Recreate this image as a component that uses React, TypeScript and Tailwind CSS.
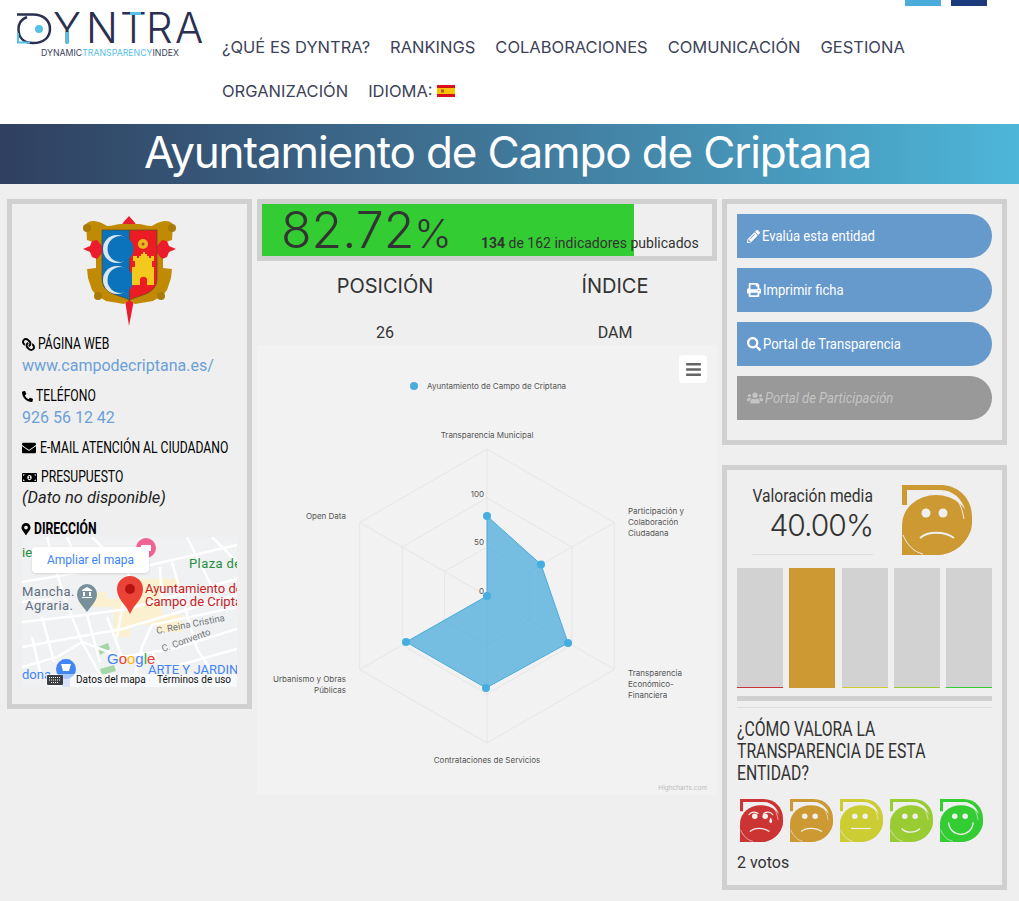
import { FaBars, FaEnvelope, FaLink, FaMapMarkerAlt, FaMoneyBillAlt, FaPencilAlt, FaPhoneAlt, FaPrint, FaSearch, FaUsers } from "react-icons/fa";

const head = "font-['Inter',sans-serif]";

function Logo() {
    return (
        <svg width="205" height="60" viewBox="0 0 205 60" className="shrink-0">
            <path d="M17 13.5H33C44 13.5 50 20 50 28C50 37 43 42 33 42C24 42 18.500 37 18.500 28C18.500 22 22 18 27 16" fill="none" stroke="#2b3050" strokeWidth="2.500" />
            <path d="M18 32V41.500H30" fill="none" stroke="#55c1e6" strokeWidth="2" />
            <circle cx="39" cy="28" r="4" fill="#55c1e6" />
            <text y="42" x="53 86 120 146 175" fill="#2b3050" fontFamily="Inter" fontWeight="300" fontSize="42">YNTRA</text>
            <rect x="65.500" y="31" width="3" height="12" fill="#55c1e6" />
            <rect x="130" y="11" width="11" height="3" fill="#55c1e6" />
            <text x="41" y="54.500" fontFamily="Inter" fontSize="9.500" textLength="138" lengthAdjust="spacingAndGlyphs" fill="#3a3f5c">
                DYNAMIC<tspan fill="#55c1e6">TRANSPARENCY</tspan>INDEX
            </text>
        </svg>
    );
}

function Flag() {
    return (
        <svg width="18" height="12" viewBox="0 0 18 12" className="ml-1 inline-block">
            <rect width="18" height="12" fill="#d8121a" />
            <rect y="3" width="18" height="6" fill="#f8c400" />
            <rect x="4" y="4.500" width="3" height="3" fill="#b5502a" />
        </svg>
    );
}

function Coat() {
    return (
        <svg width="93" height="111" viewBox="0 0 93 111" className="mx-auto">
            <path d="M38 14C38 7 42 5 46 0C50 5 54 7 54 14Z" fill="#ec1c2c" />
            <path d="M42 84H51L46 110Z" fill="#ec1c2c" />
            <path d="M3 8C8 2 18 6 24 10C30 10 34 8 38 8L55 8C59 8 63 10 69 10C75 6 85 2 90 8L89 24L80 27L80 52L89 53L88 62L84 74L80 79L70 85L52 88L46 84L41 88L23 85L13 79L9 74L5 62L4 53L13 52L13 27L4 24Z" fill="#c18a04" />
            <circle cx="4" cy="12" r="4" fill="#a97a08" />
            <circle cx="89" cy="12" r="4" fill="#a97a08" />
            <circle cx="15" cy="80" r="4" fill="#a97a08" />
            <circle cx="78" cy="80" r="4" fill="#a97a08" />
            <path d="M0 33L7 30L9 25L14 24L19 30V37L14 43L9 41L7 36Z" fill="#ec1c2c" />
            <path d="M93 33L86 30L84 25L79 24L74 30V37L79 43L84 41L86 36Z" fill="#ec1c2c" />
            <path d="M19 14H46.500V84C38 80 30 79 25 75C21 72 19 68 19 62Z" fill="#0b72bc" stroke="#5a4a20" strokeWidth="0.700" />
            <path d="M74 14H46.500V84C55 80 63 79 68 75C72 72 74 68 74 62Z" fill="#ec1c25" stroke="#5a4a20" strokeWidth="0.700" />
            <circle cx="34" cy="33" r="14" fill="#dde6ea" />
            <circle cx="37.500" cy="33" r="13" fill="#0b72bc" />
            <circle cx="34" cy="64" r="14" fill="#dde6ea" />
            <circle cx="37.500" cy="64" r="13" fill="#0b72bc" />
            <circle cx="60" cy="28" r="5" fill="#e8b820" />
            <circle cx="60" cy="28" r="1.500" fill="#a8501a" />
            <path d="M50 51H52V45H50V40H54V42H56V40H58V38H60V36H62V38H64V40H66V42H68V40H71V45H69V51H71V69H64V63C63 60 58 60 57 63V69H49V51Z" fill="#f4c91e" />
        </svg>
    );
}

function MapView() {
    const streets = [
        "M25 0L42 60L60 105L85 150",
        "M0 45L60 35L120 30L215 8",
        "M0 85L62 78L105 72L215 42",
        "M0 110L55 100L100 92L215 58",
        "M110 150L120 110L130 88L215 70",
        "M60 105L100 120L150 112L215 92",
        "M120 0L108 30L100 72L95 100",
        "M65 78L78 125",
        "M0 130L35 120L60 105",
        "M165 0L180 30L195 60",
        "M150 25L160 60L175 112",
        "M70 0L95 25",
        "M130 115L150 150",
        "M175 112L200 150",
        "M0 65L30 62",
        "M20 80L32 125",
        "M45 0L60 35",
        "M138 30L140 60",
        "M190 0L215 25",
        "M85 80L100 120",
        "M150 130L215 112",
        "M10 100L18 135",
    ];
    return (
        <div className="relative h-[150px] w-[215px] overflow-hidden bg-[#f0f1f3]">
            <svg width="215" height="150" viewBox="0 0 215 150" className="block">
                <path d="M54 55H85V62H100V42H158V50H140V78H160V95H135V88H108V100H92V70H58Z" fill="#fbf1d0" />
                <path d="M76 110L86 106L88 112L78 118Z" fill="#a5d6a7" />
                <path d="M78 132L92 128L94 134L80 138Z" fill="#a5d6a7" />
                {streets.map((d) => (
                    <path key={d} d={d} fill="none" stroke="#fff" strokeWidth="2.500" />
                ))}
                <circle cx="124" cy="11" r="10" fill="#f06292" />
                <rect x="119" y="8" width="10" height="6" fill="#fff" />
                <g fontFamily="Roboto">
                    <text x="0" y="20" fontSize="13" fill="#1e8e3e">ie</text>
                    <text x="167" y="31" fontSize="13" letterSpacing="0.4" fill="#1e8e3e">Plaza de</text>
                    <text x="0" y="59" fontSize="13" letterSpacing="0.4" fill="#5f6f7f">Mancha.</text>
                    <text x="3" y="73" fontSize="13" letterSpacing="0.4" fill="#5f6f7f">Agraria.</text>
                    <text x="123" y="56" fontSize="13" fill="#c5221f">Ayuntamiento de</text>
                    <text x="123" y="69" fontSize="13" fill="#c5221f">Campo de Criptana</text>
                    <text x="135" y="97" fontSize="9.500" fill="#70757a" transform="rotate(-11 135 97)">C. Reina Cristina</text>
                    <text x="141" y="115" fontSize="9.500" fill="#70757a" transform="rotate(-20 141 115)">C. Convento</text>
                    <text x="0" y="142" fontSize="13" fill="#4285f4">dona</text>
                    <text x="126" y="137" fontSize="13" fill="#4285f4">ARTE Y JARDIN</text>
                </g>
                <path d="M65 75C60 68 55 64 55 57A10 10 0 0 1 75 57C75 64 70 68 65 75Z" fill="#78909c" />
                <path d="M60 53L65 50L70 53V54H60ZM61 55H63V59H61ZM67 55H69V59H67ZM60 60H70V61H60Z" fill="#fff" />
                <path d="M108 77C103 66 95 62 95 52A13 13 0 0 1 121 52C121 62 113 66 108 77Z" fill="#ea4335" />
                <circle cx="108" cy="52" r="5" fill="#b31412" />
                <path d="M44 150V122" stroke="#a9c4f5" strokeWidth="8" />
                <circle cx="44" cy="132" r="10" fill="#4285f4" />
                <path d="M39 127H49L47 134H41Z" fill="#fff" />
                <text x="85" y="127" fontFamily="Liberation Sans" fontSize="15">
                    <tspan fill="#4285f4">G</tspan>
                    <tspan fill="#ea4335">o</tspan>
                    <tspan fill="#fbbc05">o</tspan>
                    <tspan fill="#4285f4">g</tspan>
                    <tspan fill="#34a853">l</tspan>
                    <tspan fill="#ea4335">e</tspan>
                </text>
                <path d="M24 137H215V150H24Z" fill="#fff" opacity="0.55" />
                <rect x="25" y="138" width="16" height="10" rx="1" fill="#3c4043" />
                <path d="M27 140.500H39M27 143H39M29 145.500H37" stroke="#fff" strokeDasharray="1 1" />
                <g fontFamily="Roboto" fontSize="10" fill="#111">
                    <text x="54" y="146">Datos del mapa</text>
                    <text x="135" y="146">Términos de uso</text>
                </g>
            </svg>
            <div className="absolute left-[10px] top-[10px] flex h-[26px] w-[117px] items-center justify-center rounded-sm bg-white text-[12px] text-[#3b82f6] shadow-sm">Ampliar el mapa</div>
        </div>
    );
}

function LeftPanel() {
    const label = "flex items-center gap-1 text-[16px] leading-[22px] text-black whitespace-nowrap";
    const tight = "inline-block origin-left scale-x-[0.76]";
    const link = "text-[16px] leading-[22px] text-[#6a9fd8]";
    return (
        <aside className="w-[245px] shrink-0 self-start border-[5px] border-[#d0d0d0] px-[10px] pb-[17px] pt-[12px]">
            <Coat />
            <div className={`${label} mt-[6px]`}><FaLink size={13} className="-mr-px shrink-0 -scale-x-100" /> <span className={tight}>PÁGINA WEB</span></div>
            <div className={link}>www.campodecriptana.es/</div>
            <div className={`${label} mt-[8px]`}><FaPhoneAlt size={11} className="-mr-px shrink-0" /> <span className={tight}>TELÉFONO</span></div>
            <div className={link}>926 56 12 42</div>
            <div className={`${label} mt-[8px]`}><FaEnvelope size={14} className="shrink-0" /> <span className={tight}>E-MAIL ATENCIÓN AL CIUDADANO</span></div>
            <div className={`${label} mt-[7px]`}><FaMoneyBillAlt size={15} className="shrink-0" /> <span className={tight}>PRESUPUESTO</span></div>
            <div className="-mt-px text-[16.500px] italic leading-[22px] text-[#222]">(Dato no disponible)</div>
            <div className={`${label} -mb-[3px] mt-[9px] font-bold`}><FaMapMarkerAlt size={12} className="-ml-[2px] -mr-[2px] shrink-0" /> <span className={tight}>DIRECCIÓN</span></div>
            <MapView />
        </aside>
    );
}

const radar = [
    { x: 487, y: 516 },
    { x: 541, y: 564.5 },
    { x: 568, y: 643 },
    { x: 486, y: 688 },
    { x: 406, y: 642 },
    { x: 487, y: 596 },
];

function hexagon(r: number) {
    return [0, 1, 2, 3, 4, 5]
        .map((i) => {
            const a = (Math.PI / 3) * i;
            return `${487 + r * Math.sin(a)},${596 - r * Math.cos(a)}`;
        })
        .join(" ");
}

function RadarChart() {
    const spokes = [0, 1, 2, 3, 4, 5].map((i) => {
        const a = (Math.PI / 3) * i;
        return { x: 487 + 147 * Math.sin(a), y: 596 - 147 * Math.cos(a) };
    });
    return (
        <div className="relative h-[450px] w-[460px] bg-[#f2f2f2]">
            <svg width="460" height="450" viewBox="257 345 460 450" className="block" fontFamily="Inter" fontSize="8" fill="#555">
                <circle cx="414" cy="386" r="4" fill="#4bacdb" />
                <text x="427" y="389">Ayuntamiento de Campo de Criptana</text>
                {[49, 98, 147].map((r) => (
                    <polygon key={r} points={hexagon(r)} fill="none" stroke="#e6e6e6" />
                ))}
                {spokes.map((s) => (
                    <line key={s.x + "-" + s.y} x1="487" y1="596" x2={s.x} y2={s.y} stroke="#e6e6e6" />
                ))}
                <polygon points={radar.map((p) => `${p.x},${p.y}`).join(" ")} fill="#4bacdb" fillOpacity="0.75" stroke="#4bacdb" />
                {radar.map((p) => (
                    <circle key={p.x} cx={p.x} cy={p.y} r="4" fill="#45aee0" />
                ))}
                <text x="487" y="438" textAnchor="middle">Transparencia Municipal</text>
                <text x="484" y="497" textAnchor="end">100</text>
                <text x="484" y="545" textAnchor="end">50</text>
                <text x="484" y="594" textAnchor="end">0</text>
                <text x="346" y="519" textAnchor="end">Open Data</text>
                <text x="628" y="514">Participación y</text>
                <text x="628" y="525">Colaboración</text>
                <text x="628" y="536">Ciudadana</text>
                <text x="628" y="676">Transparencia</text>
                <text x="628" y="687">Económico-</text>
                <text x="628" y="698">Financiera</text>
                <text x="487" y="763" textAnchor="middle">Contrataciones de Servicios</text>
                <text x="346" y="682" textAnchor="end">Urbanismo y Obras</text>
                <text x="346" y="693" textAnchor="end">Públicas</text>
                <text x="707" y="790" textAnchor="end" fontSize="6.500" fill="#bbb">Highcharts.com</text>
            </svg>
            <div className="absolute right-[10px] top-[10px] flex h-[28px] w-[28px] items-center justify-center rounded-sm bg-white text-[#666]">
                <FaBars size={17} />
            </div>
        </div>
    );
}

function CenterPanel() {
    return (
        <main className="w-[460px] shrink-0 self-start text-[#333]">
            <div className="h-[62px] border-[5px] border-[#d0d0d0]">
                <div className="relative h-[52px]">
                    <div className="absolute inset-y-0 left-0 w-[82.72%] bg-[#33cc33]" />
                    <div className={`absolute left-[19px] top-[-3px] whitespace-nowrap text-[50px] font-light leading-[58px] ${head}`}>
                        82.72<span className="text-[40px]">%</span>
                    </div>
                    <div className="absolute left-[219px] top-[30px] whitespace-nowrap text-[14px] leading-[18px]">
                        <b>134</b> de 162 indicadores publicados
                    </div>
                </div>
            </div>
            <div className="-mr-[13px] ml-[13px] grid w-[460px] grid-cols-2 text-center">
                <div className={`mt-[11px] text-[20px] leading-[28px] ${head}`}>POSICIÓN</div>
                <div className={`mt-[11px] text-[20px] leading-[28px] ${head}`}>ÍNDICE</div>
                <div className="mt-[21px] text-[16px] leading-[24px]">26</div>
                <div className="mt-[21px] text-[16px] leading-[24px]">DAM</div>
            </div>
            <RadarChart />
        </main>
    );
}

type FaceKind = "cry" | "sad" | "flat" | "smile" | "happy";

function Face({ color, kind, size }: { color: string; kind: FaceKind; size: number }) {
    const bg = "#efefef";
    return (
        <svg width={size} height={size} viewBox="0 0 70 70" className="block shrink-0">
            <path d="M0 0H38C57 0 70 14 70 32V38C70 52 55 70 34 70H0Z" fill={color} />
            <path d="M-1 20H5V5H38C54 5 63 18 65 32L35 42L-1 42Z" fill={bg} />
            <ellipse cx="34" cy="40" rx="34" ry="30" fill={color} />
            <path d="M43 6C54 9 60 20 62 34" fill="none" stroke={bg} strokeWidth="1" />
            <path d="M1 50C5 60 12 67 21 69" fill="none" stroke={bg} strokeWidth="1" />
            <circle cx="24" cy="28" r="4.500" fill={bg} />
            <circle cx="41" cy="28" r="4.500" fill={bg} />
            {kind === "cry" && <path d="M16 53C24 46 38 46 48 53M14 26C18 20 26 20 30 24M38 24C42 20 50 20 54 26" fill="none" stroke={bg} strokeWidth="2" />}
            {kind === "cry" && <path d="M50 30C47 35 47 39 50 39C53 39 53 35 50 30Z" fill={bg} />}
            {kind === "sad" && <path d="M18 53C26 46 42 46 52 53" fill="none" stroke={bg} strokeWidth="2" />}
            {kind === "flat" && <path d="M18 48H50" fill="none" stroke={bg} strokeWidth="2" />}
            {kind === "smile" && <path d="M19 48C26 56 40 56 49 48" fill="none" stroke={bg} strokeWidth="2" />}
            {kind === "happy" && <path d="M14 38C16 64 52 64 54 38" fill="none" stroke={bg} strokeWidth="2" />}
        </svg>
    );
}

const buttons = [
    { icon: <FaPencilAlt size={13} className="shrink-0" />, label: "Evalúa esta entidad" },
    { icon: <FaPrint size={14} className="shrink-0" />, label: "Imprimir ficha" },
    { icon: <FaSearch size={14} className="shrink-0" />, label: "Portal de Transparencia" },
];

const bars = ["border-[#cc3333]", "border-[#cc9933]", "border-[#cccc33]", "border-[#99cc33]", "border-[#33cc33]"];

const faces: { color: string; kind: FaceKind }[] = [
    { color: "#cc3333", kind: "cry" },
    { color: "#cc9933", kind: "sad" },
    { color: "#cccc33", kind: "flat" },
    { color: "#99cc33", kind: "smile" },
    { color: "#33cc33", kind: "happy" },
];

function RightPanel() {
    const tight = "inline-block origin-left scale-x-[0.87] whitespace-nowrap";
    return (
        <aside className="w-[285px] shrink-0 self-start text-[#333]">
            <div className="flex flex-col gap-[10px] border-[5px] border-[#d0d0d0] px-[10px] pb-[20px] pt-[10px]">
                {buttons.map((b) => (
                    <div key={b.label} className="flex h-[44px] items-center gap-[2px] rounded-r-[22px] bg-[#6699cc] pl-[10px] text-[15px] text-white">
                        {b.icon} <span className={tight}>{b.label}</span>
                    </div>
                ))}
                <div className="flex h-[44px] items-center gap-[2px] rounded-r-[22px] bg-[#999] pl-[10px] text-[15px] italic text-[#c4c4c4]">
                    <FaUsers size={16} className="shrink-0" /> <span className={tight}>Portal de Participación</span>
                </div>
            </div>
            <div className="mt-[20px] h-[425px] border-[5px] border-[#d0d0d0] px-[10px] pt-[15px]">
                <div className="flex">
                    <div className="ml-[15px] w-[121px]">
                        <div className="flex justify-end whitespace-nowrap text-[19px] leading-[22px]">
                            <span className="inline-block shrink-0 origin-right scale-x-[0.82]">Valoración media</span>
                        </div>
                        <div className={`whitespace-nowrap text-right text-[30px] font-light leading-[36px] tracking-[-1px] ${head}`}>40.00%</div>
                        <div className="mt-[11px] border-t border-[#ddd]" />
                    </div>
                    <div className="ml-[29px]">
                        <Face color="#cc9933" kind="sad" size={70} />
                    </div>
                </div>
                <div className="mt-[13px] flex justify-between">
                    {bars.map((b, i) => (
                        <div key={b} className={`h-[120px] w-[46px] border-b ${b} ${i === 1 ? "bg-[#cc9933]" : "bg-[#d2d2d2]"}`} />
                    ))}
                </div>
                <div className="mt-[8px] h-[5px] bg-[#d0d0d0]" />
                <div className="mt-[6px] border-t border-[#ddd]" />
                <div className="mt-[10px] w-[340px] origin-left scale-x-[0.75] text-[21px] leading-[22px]">
                    ¿CÓMO VALORA LA<br />TRANSPARENCIA DE ESTA<br />ENTIDAD?
                </div>
                <div className="ml-[3px] mt-[15px] flex gap-[7px]">
                    {faces.map((f) => (
                        <Face key={f.color} color={f.color} kind={f.kind} size={43} />
                    ))}
                </div>
                <div className="mt-[11px] text-[16px] leading-[20px]">2 votos</div>
            </div>
        </aside>
    );
}

function App() {
    return (
        <div className="min-h-[901px] overflow-hidden bg-[#efefef] font-['Roboto',sans-serif]">
            <header className="relative flex h-[124px] bg-white">
                <div className="mt-[1px] w-[222px] shrink-0">
                    <Logo />
                </div>
                <nav className={`flex h-max w-[720px] flex-wrap gap-x-[20px] pt-[25px] text-[16.500px] leading-[44px] text-[#3c4358] ${head}`}>
                    <span>¿QUÉ ES DYNTRA?</span>
                    <span>RANKINGS</span>
                    <span>COLABORACIONES</span>
                    <span>COMUNICACIÓN</span>
                    <span>GESTIONA</span>
                    <span>ORGANIZACIÓN</span>
                    <span className="flex items-center">IDIOMA: <Flag /></span>
                </nav>
                <div className="absolute right-[32px] top-0 flex gap-[10px]">
                    <div className="h-[6px] w-[36px] bg-[#4bacdb]" />
                    <div className="h-[6px] w-[36px] bg-[#1a3a7c]" />
                </div>
            </header>
            <div className={`h-[60px] bg-gradient-to-r from-[#2f4060] to-[#4db6d9] pr-[4px] text-center text-[44px] leading-[56px] tracking-[-1.150px] text-white ${head}`}>
                Ayuntamiento de Campo de Criptana
            </div>
            <div className="flex gap-[5px] pl-[7px] pt-[15px]">
                <LeftPanel />
                <CenterPanel />
                <RightPanel />
            </div>
        </div>
    );
}

export default App;
